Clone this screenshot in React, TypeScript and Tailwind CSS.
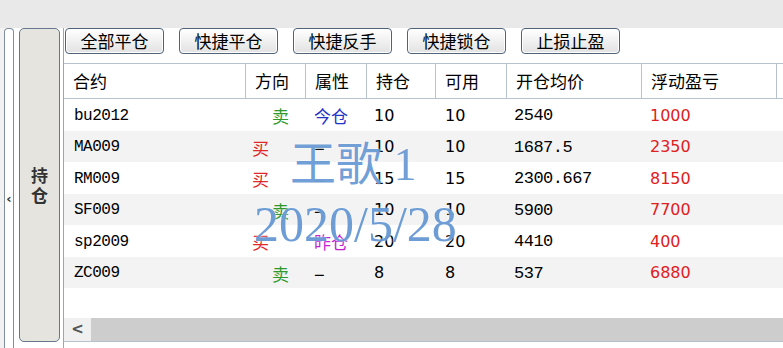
const cols = "grid grid-cols-[182px_60px_61px_69px_71px_135px_135px_1fr]";

const rows = [
  { code: "bu2012", dir: "卖", attr: "今仓", pos: "10", avail: "10", price: "2540", pnl: "1000" },
  { code: "MA009", dir: "买", attr: "–", pos: "10", avail: "10", price: "1687.5", pnl: "2350" },
  { code: "RM009", dir: "买", attr: "–", pos: "15", avail: "15", price: "2300.667", pnl: "8150" },
  { code: "SF009", dir: "卖", attr: "–", pos: "10", avail: "10", price: "5900", pnl: "7700" },
  { code: "sp2009", dir: "买", attr: "昨仓", pos: "20", avail: "20", price: "4410", pnl: "400" },
  { code: "ZC009", dir: "卖", attr: "–", pos: "8", avail: "8", price: "537", pnl: "6880" },
];

const buttons = ["全部平仓", "快捷平仓", "快捷反手", "快捷锁仓", "止损止盈"];

const cjk = "font-['Noto_Sans_CJK_SC',sans-serif]";

const App = () => (
  <div className="flex h-[348px] w-[783px] flex-col overflow-hidden bg-white text-black">
    <div className="h-[28px] shrink-0 bg-[#e9e9e9]" />
    <div className="flex min-h-0 flex-1">
      {/* collapse strip */}
      <div className="w-[4px] bg-[#f2f2f2]" />
      <div className="flex w-[10px] items-center justify-center rounded-t-[4px] border-x border-t border-[#7f8fa0] bg-white pt-[20px]">
        <span className="font-['DejaVu_Sans',sans-serif] text-[13px] font-bold text-[#333]">‹</span>
      </div>
      {/* tab */}
      <div className="ml-[5px] mb-[6px] flex w-[41px] items-center justify-center rounded-[5px] border border-[#66788a] bg-[#e5e4de]">
        <div className={`${cjk} flex flex-col text-[17px] font-bold leading-[20px] text-[#333]`}>
          <span>持</span>
          <span>仓</span>
        </div>
      </div>
      {/* main */}
      <div className="relative ml-[3px] flex min-w-0 flex-1 flex-col border-l border-[#9aa8b6]">
        <div className={`${cjk} flex h-[35px] shrink-0 gap-[15px] pl-[1px]`}>
          {buttons.map((b) => (
            <button
              key={b}
              className="h-[26px] w-[99px] rounded-[4px] border border-[#4f6478] bg-gradient-to-b from-white to-[#e2e2e2] text-[17px] leading-[24px] text-black shadow-[inset_0_0_0_1px_#fff]"
            >
              {b}
            </button>
          ))}
        </div>
        <div className={`${cols} h-[36px] shrink-0 border-y border-[#b7c2cd] ${cjk} text-[17px]`}>
          {["合约", "方向", "属性", "持仓", "可用", "开仓均价", "浮动盈亏", ""].map((h, i) => (
            <div key={i} className="flex items-center border-r border-[#b7c2cd] pl-[9px]">
              {h}
            </div>
          ))}
        </div>
        <div className="flex flex-col">
          {rows.map((r, i) => (
            <div
              key={r.code}
              className={`${cols} h-[31.5px] items-center pt-[2px] text-[17px] ${i % 2 ? "bg-[#f3f3f3]" : "bg-white"}`}
            >
              <div className="pl-[10px] font-['Liberation_Mono',monospace] text-[16px] tracking-[-0.5px]">{r.code}</div>
              <div className={`${cjk} ${r.dir === "卖" ? "pl-[26px] text-[#2e9a2e]" : "pl-[6px] text-[#e02828]"}`}>
                {r.dir}
              </div>
              <div
                className={`${cjk} pl-[8px] ${
                  r.attr === "今仓" ? "text-[#2232c8]" : r.attr === "昨仓" ? "text-[#c21ed0]" : "pl-[8px] text-[20px] leading-none text-black"
                }`}
              >
                {r.attr}
              </div>
              <div className="pl-[7px] font-['DejaVu_Sans',sans-serif] text-[16px]">{r.pos}</div>
              <div className="pl-[9px] font-['DejaVu_Sans',sans-serif] text-[16px]">{r.avail}</div>
              <div className="pl-[7px] font-['Liberation_Mono',monospace] text-[17px] tracking-[-0.5px]">{r.price}</div>
              <div className="pl-[8px] font-['DejaVu_Sans',sans-serif] text-[16px] text-[#e02020]">{r.pnl}</div>
              <div />
            </div>
          ))}
        </div>
        <div className="flex-1" />
        <div className="flex h-[24px] shrink-0 border-b border-[#b7c2cd]">
          <div className="flex w-[27px] items-center justify-center bg-[#f0f0f0] font-['DejaVu_Sans',sans-serif] text-[15px] font-bold text-[#555]">
            &lt;
          </div>
          <div className="flex-1 bg-[#cdcdcd]" />
        </div>
        <div className="h-[6px] shrink-0" />

        {/* watermark */}
        <div className="pointer-events-none absolute left-[226px] top-[114px] font-['Liberation_Serif','Noto_Sans_CJK_SC',serif] text-[46px] leading-none text-[#4a85cc]/80 [text-shadow:0_0_2px_#fff]">
          王歌 1
        </div>
        <div className="pointer-events-none absolute left-[190px] top-[171px] font-['Liberation_Serif',serif] text-[50px] leading-none text-[#4a85cc]/80 [text-shadow:0_0_2px_#fff]">
          2020/5/28
        </div>
      </div>
    </div>
  </div>
);

export default App;
